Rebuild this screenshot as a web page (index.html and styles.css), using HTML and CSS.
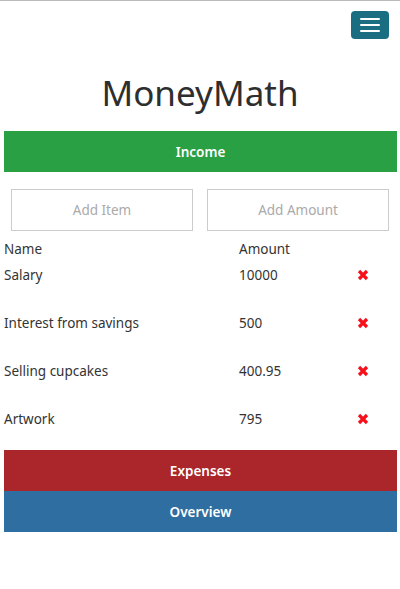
FILE: index.html
```html
<!DOCTYPE html>
<html>
<head>
<meta charset="utf-8">
<link rel="stylesheet" href="styles.css">
</head>
<body>
<header class="topbar">
  <button class="menu-btn" aria-label="menu">
    <span class="bar"></span><span class="bar"></span><span class="bar"></span>
  </button>
</header>
<h1 class="title">MoneyMath</h1>
<main class="content">
  <div class="section-btn income">Income</div>
  <div class="inputs">
    <input class="field" type="text" placeholder="Add Item">
    <input class="field" type="text" placeholder="Add Amount">
  </div>
  <div class="table">
    <div class="row head"><span class="c-name">Name</span><span class="c-amt">Amount</span><span class="c-del"></span></div>
    <div class="rows">
      <div class="row"><span class="c-name">Salary</span><span class="c-amt">10000</span><span class="c-del"><svg class="x-icon" viewBox="0 0 12 12"><path d="M2 2L10 10M10 2L2 10"/></svg></span></div>
      <div class="row"><span class="c-name">Interest from savings</span><span class="c-amt">500</span><span class="c-del"><svg class="x-icon" viewBox="0 0 12 12"><path d="M2 2L10 10M10 2L2 10"/></svg></span></div>
      <div class="row"><span class="c-name">Selling cupcakes</span><span class="c-amt">400.95</span><span class="c-del"><svg class="x-icon" viewBox="0 0 12 12"><path d="M2 2L10 10M10 2L2 10"/></svg></span></div>
      <div class="row"><span class="c-name">Artwork</span><span class="c-amt">795</span><span class="c-del"><svg class="x-icon" viewBox="0 0 12 12"><path d="M2 2L10 10M10 2L2 10"/></svg></span></div>
    </div>
  </div>
  <div class="section-btn expenses">Expenses</div>
  <div class="section-btn overview">Overview</div>
</main>
</body>
</html>
```
FILE: styles.css
```css
html, body {
  margin: 0;
  padding: 0;
  background: #fff;
}
body {
  font-family: "Noto Sans", "Open Sans", sans-serif;
  color: #333;
  font-size: 13.5px;
  border-top: 1px solid #bbb;
}
.topbar {
  display: flex;
  justify-content: flex-end;
  padding: 10px 11px 0 0;
}
.menu-btn {
  width: 38px;
  height: 28px;
  background: #1b6d81;
  border: none;
  border-radius: 4px;
  display: flex;
  flex-direction: column;
  align-items: center;
  justify-content: center;
  gap: 4px;
  padding: 0;
}
.bar {
  display: block;
  width: 20px;
  height: 2px;
  background: #fff;
  border-radius: 1px;
}
.title {
  margin: 30px 0 0;
  text-align: center;
  font-weight: 400;
  font-size: 35px;
  line-height: 48px;
  color: #2e2e2e;
}
.content {
  margin: 14px 3px 0 4px;
}
.section-btn {
  height: 41px;
  display: flex;
  align-items: center;
  justify-content: center;
  color: #fff;
  font-weight: 600;
  font-size: 13.5px;
}
.income { background: #2aa045; }
.expenses { background: #aa262a; margin-top: 22px; }
.overview { background: #2f6ea1; }
.inputs {
  display: flex;
  gap: 14px;
  padding: 17px 8px 0 7px;
}
.field {
  flex: 1;
  min-width: 0;
  height: 42px;
  box-sizing: border-box;
  border: 1px solid #ccc;
  border-radius: 0;
  text-align: center;
  font-family: inherit;
  font-size: 13.5px;
  color: #333;
  outline: none;
}
.field::placeholder { color: #aaa; }
.table {
  margin-top: 9px;
}
.row {
  display: grid;
  grid-template-columns: 235px 118px 1fr;
  line-height: 18px;
  align-items: center;
}
.head { margin-bottom: 8px; }
.rows {
  display: flex;
  flex-direction: column;
  gap: 30px;
}
.c-del {
  display: flex;
  align-items: center;
}
.x-icon {
  width: 12px;
  height: 12px;
  stroke: #f5101a;
  stroke-width: 3.2;
  fill: none;
}
```
